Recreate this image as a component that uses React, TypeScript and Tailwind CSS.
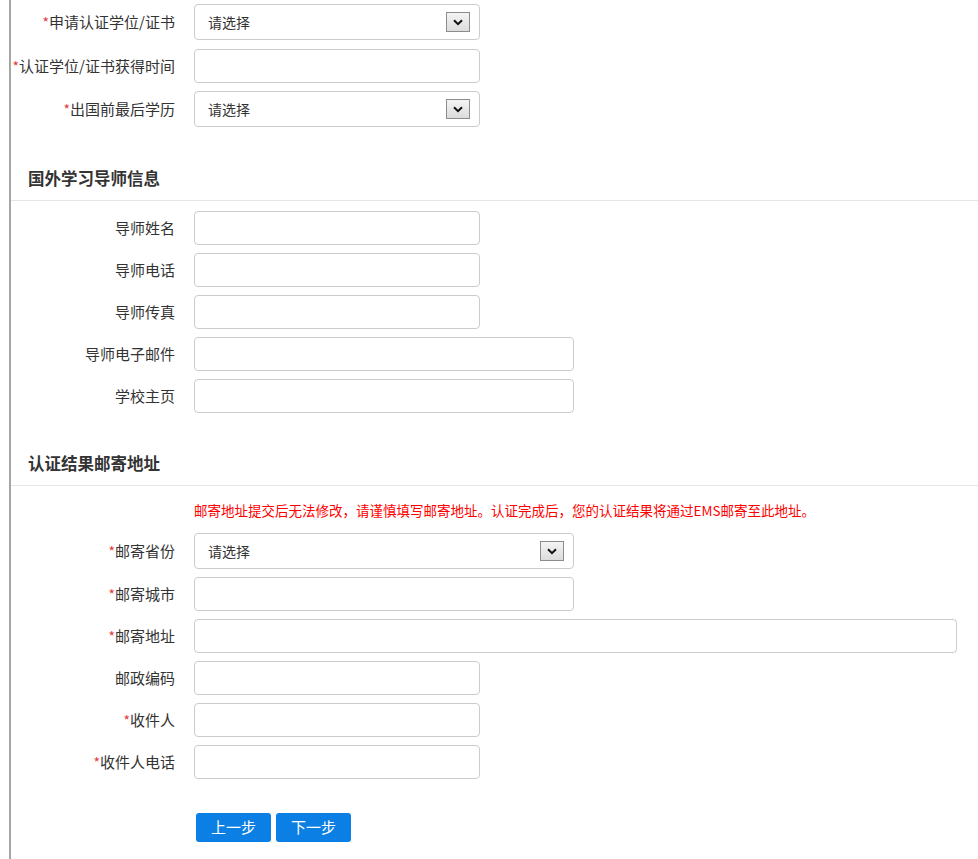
import React from 'react';

type Field = {
  label: string;
  required?: boolean;
  kind?: 'input' | 'select';
  width: 'sm' | 'md' | 'lg';
};

const widthClass = {
  sm: 'w-[286px]',
  md: 'w-[380px]',
  lg: 'w-[763px]',
};

const topFields: Field[] = [
  { label: '申请认证学位/证书', required: true, kind: 'select', width: 'sm' },
  { label: '认证学位/证书获得时间', required: true, width: 'sm' },
  { label: '出国前最后学历', required: true, kind: 'select', width: 'sm' },
];

const tutorFields: Field[] = [
  { label: '导师姓名', width: 'sm' },
  { label: '导师电话', width: 'sm' },
  { label: '导师传真', width: 'sm' },
  { label: '导师电子邮件', width: 'md' },
  { label: '学校主页', width: 'md' },
];

const mailFields: Field[] = [
  { label: '邮寄省份', required: true, kind: 'select', width: 'md' },
  { label: '邮寄城市', required: true, width: 'md' },
  { label: '邮寄地址', required: true, width: 'lg' },
  { label: '邮政编码', width: 'sm' },
  { label: '收件人', required: true, width: 'sm' },
  { label: '收件人电话', required: true, width: 'sm' },
];

const Label: React.FC<{ text: string; required?: boolean }> = ({ text, required }) => (
  <div className="w-[176px] shrink-0 pr-[1px] text-right text-[15px] text-[#333] whitespace-nowrap">
    {required && <span className="text-[14px] text-[#e4393c]">*</span>}
    {text}
  </div>
);

const SelectBox: React.FC<{ width: string }> = ({ width }) => (
  <div
    className={`${width} h-[36px] flex items-center justify-between rounded-[4px] border border-[#ccc] bg-white pl-[13px] pr-[9px] text-[14px] text-[#333]`}
  >
    <span>请选择</span>
    <div className="flex h-[20px] w-[24px] items-center justify-center border border-[#8c8c8c] bg-gradient-to-b from-[#f4f4f4] to-[#dcdcdc]">
      <svg width="10" height="7" viewBox="0 0 10 7">
        <path d="M1 1.2 L5 5.2 L9 1.2" fill="none" stroke="#111" strokeWidth="2" />
      </svg>
    </div>
  </div>
);

const Row: React.FC<{ field: Field; className?: string }> = ({ field, className }) => (
  <div className={`flex items-center ${className ?? ''}`}>
    <Label text={field.label} required={field.required} />
    <div className="ml-[18px]">
      {field.kind === 'select' ? (
        <SelectBox width={widthClass[field.width]} />
      ) : (
        <input
          type="text"
          className={`${widthClass[field.width]} h-[34px] rounded-[4px] border border-[#ccc] bg-white px-2 text-[14px] outline-none`}
        />
      )}
    </div>
  </div>
);

const SectionHeader: React.FC<{ title: string; className?: string }> = ({ title, className }) => (
  <div className={`flex h-[44px] items-center border-b border-[#e5e5e5] pl-[17px] text-[16.5px] font-bold text-[#333] ${className ?? ''}`}>
    {title}
  </div>
);

export default function App() {
  return (
    <div
      className="min-h-[859px] w-[978px] bg-white"
      style={{ fontFamily: '"Microsoft YaHei", "Noto Sans CJK SC", sans-serif' }}
    >
      <div className="ml-[9px] min-h-[859px] border-l-2 border-[#a6a6a6] pt-[4px] pb-[16px]">
        {/* 学位信息 */}
        <div className="-ml-[11px] flex flex-col">
          <Row field={topFields[0]} />
          <Row field={topFields[1]} className="mt-[9px]" />
          <Row field={topFields[2]} className="mt-[8px]" />
        </div>

        <SectionHeader title="国外学习导师信息" className="mt-[30px]" />

        <div className="-ml-[11px] mt-[10px] flex flex-col gap-[8px]">
          {tutorFields.map((f) => (
            <Row key={f.label} field={f} />
          ))}
        </div>

        <SectionHeader title="认证结果邮寄地址" className="mt-[29px]" />

        <div className="-ml-[11px]">
          <div className="mt-[14px] flex h-[20px] items-center pl-[194px] text-[13.5px] text-[#f00] whitespace-nowrap">
            邮寄地址提交后无法修改，请谨慎填写邮寄地址。认证完成后，您的认证结果将通过EMS邮寄至此地址。
          </div>
          <div className="mt-[13px] flex flex-col gap-[8px]">
            {mailFields.map((f) => (
              <Row key={f.label} field={f} />
            ))}
          </div>
          <div className="mt-[34px] flex gap-[5px] pl-[196px]">
            <button className="h-[29px] w-[75px] rounded-[3px] bg-[#0b7fe3] text-[15px] text-white">上一步</button>
            <button className="h-[29px] w-[75px] rounded-[3px] bg-[#0b7fe3] text-[15px] text-white">下一步</button>
          </div>
        </div>
      </div>
    </div>
  );
}
